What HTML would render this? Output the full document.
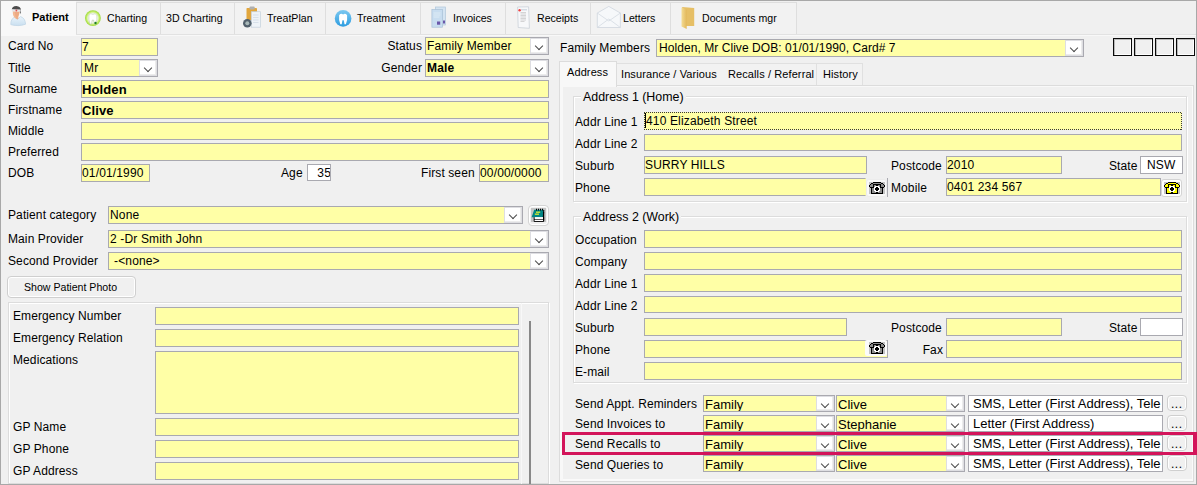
<!DOCTYPE html>
<html><head><meta charset="utf-8">
<style>
*{box-sizing:border-box;margin:0;padding:0}
html,body{width:1197px;height:485px;overflow:hidden;background:#f0f0f0;font-family:"Liberation Sans",sans-serif;font-size:12px;color:#000;position:relative}
div,span{position:absolute}
.l{white-space:nowrap;line-height:14px;font-size:12px;letter-spacing:0.1px}
.r{text-align:right}
.i{background:#ffffa6;border:1px solid #a9a9b0;overflow:hidden}
.w{background:#fff;border:1px solid #a9a9b0;overflow:hidden}
.t{white-space:nowrap;line-height:14px;left:1px;letter-spacing:0.15px}
.dd{top:0;right:0;bottom:0;width:18px;background:#fff;border:1px solid #dedee2;box-shadow:inset -1px -1px 0 #ececec}
.dd::after{content:"";position:absolute;left:5px;top:4px;width:5px;height:5px;border-right:1.2px solid #4a4a4a;border-bottom:1.2px solid #4a4a4a;transform:rotate(45deg)}
.tab{top:2px;height:33px;border-top:1px solid #dedede;border-right:1px solid #dedede;background:#f2f2f2}
.tt{white-space:nowrap;line-height:14px;font-size:10.6px;top:11px}
.gb{border:1px solid #dcdcdc;box-shadow:inset 1px 1px 0 #fff,1px 1px 0 #fff}
.gl{background:#f0f0f0;padding:0 2px;line-height:14px;white-space:nowrap;font-size:12.4px}
.ph{background:#f8f8f8;border-right:1px solid #d8d8d8}
.dots{background:#f0f0f0;border:1px solid #cfcfcf;border-radius:4px;box-shadow:inset 0 0 0 1px #fff}
</style></head><body>
<!-- outer border -->


<!-- TOP TABS -->
<div style="left:1px;top:1px;width:75px;height:35px;background:#f8f8f8"></div>
<div style="left:76px;top:2px;width:721px;height:32px;background:#f2f2f2;border-top:1px solid #dedede"></div><div style="left:76px;top:2px;width:1px;height:32px;background:#dedede"></div><div style="left:160px;top:2px;width:1px;height:32px;background:#dedede"></div><div style="left:234px;top:2px;width:1px;height:32px;background:#dedede"></div><div style="left:325px;top:2px;width:1px;height:32px;background:#dedede"></div><div style="left:420px;top:2px;width:1px;height:32px;background:#dedede"></div><div style="left:505px;top:2px;width:1px;height:32px;background:#dedede"></div><div style="left:590px;top:2px;width:1px;height:32px;background:#dedede"></div><div style="left:670px;top:2px;width:1px;height:32px;background:#dedede"></div><div style="left:796px;top:2px;width:1px;height:32px;background:#dedede"></div>
<div style="left:76px;top:34px;width:1121px;height:1px;background:#e2e2e2"></div>
<div style="left:76px;top:35px;width:1121px;height:1px;background:#f8f8f8"></div>
<svg style="position:absolute;left:0;top:0" width="800" height="36" viewBox="0 0 800 36">
<defs>
<linearGradient id="gsh" x1="0" y1="0" x2="0" y2="1"><stop offset="0" stop-color="#eaf4fb"/><stop offset="1" stop-color="#c9dff0"/></linearGradient>
<radialGradient id="ggr" cx="0.5" cy="0.5" r="0.5"><stop offset="0.6" stop-color="#f4fbe8"/><stop offset="0.78" stop-color="#c8ee70"/><stop offset="1" stop-color="#98d838"/></radialGradient>
<linearGradient id="gbl" x1="0" y1="0" x2="0" y2="1"><stop offset="0" stop-color="#7cc8f0"/><stop offset="1" stop-color="#2c9ce0"/></linearGradient>
<linearGradient id="gfo" x1="0" y1="0" x2="1" y2="0"><stop offset="0" stop-color="#f4dc94"/><stop offset="1" stop-color="#e2b85c"/></linearGradient>
</defs>
<!-- patient -->
<path d="M10.8,24.6 Q10.6,19.2 14.6,17 L17.4,19.4 L20.6,16.6 Q25.2,18.2 25.6,24.2 Q22,25.6 18,25.6 Q13.2,25.6 10.8,24.6 Z" fill="url(#gsh)" stroke="#bcd2e4" stroke-width="0.7"/>
<path d="M14.6,15.5 L18.2,15.5 L18.4,18.4 L17.2,19.6 L14.8,17.6 Z" fill="#eeae88"/>
<path d="M12.8,11 Q12.6,17 15.8,18.6 Q18.8,17.6 19.6,12.6 L19.6,10.5 Z" fill="#f3b892"/>
<path d="M14.6,11.6 Q15.2,16.5 16.4,18.2 Q18.6,17 19.4,12 Z" fill="#e8a078" opacity="0.55"/>
<path d="M11.8,9.6 Q12.2,5.8 16.4,5.9 Q20.8,6.2 21,10.2 L20.6,14.2 Q19.8,12 19.4,10.6 Z" fill="#4c4c4c"/>
<path d="M11.8,9.2 L20.8,9.6 L20.6,11.8 L12,11.6 Z" fill="#e6e8ea"/>
<circle cx="16.4" cy="10.5" r="0.9" fill="#e05050"/>
<!-- charting -->
<circle cx="92.9" cy="18.1" r="7.9" fill="url(#ggr)"/>
<path d="M88.9,15.100000000000001 Q90.7,12.600000000000001 92.9,14.3 Q95.10000000000001,12.600000000000001 96.9,15.100000000000001 Q97.5,19.6 95.7,24.1 L94.30000000000001,24.1 L93.60000000000001,20.1 L92.2,20.1 L91.5,24.1 L90.10000000000001,24.1 Q88.30000000000001,19.6 88.9,15.100000000000001 Z" fill="#ffffff" stroke="#b8c8b0" stroke-width="0.6"/>
<circle cx="95.5" cy="23" r="1.2" fill="#208020"/>
<!-- treatplan -->
<rect x="246.5" y="8" width="10.5" height="12" rx="0.8" fill="#e2a63c"/>
<rect x="249.5" y="6.4" width="5.2" height="3" rx="1" fill="#b0b0b0"/>
<rect x="251.3" y="11.7" width="9.2" height="15.5" fill="#eef3f8" stroke="#c4d0dc" stroke-width="0.7"/>
<path d="M253,15h5.5M253,17.5h5.5M253,20h5.5M253,22.5h5.5" stroke="#c8d4e0" stroke-width="0.6"/>
<circle cx="247.3" cy="23.2" r="4.3" fill="#52606c"/>
<circle cx="247.3" cy="23.2" r="2" fill="#a8b8b8"/>
<!-- treatment -->
<circle cx="343.1" cy="18.4" r="8.3" fill="url(#gbl)"/>
<path d="M339.1,15.3 Q340.90000000000003,12.8 343.1,14.5 Q345.3,12.8 347.1,15.3 Q347.70000000000005,19.8 345.90000000000003,24.3 L344.5,24.3 L343.8,20.3 L342.40000000000003,20.3 L341.70000000000005,24.3 L340.3,24.3 Q338.5,19.8 339.1,15.3 Z" fill="#ffffff"/>
<!-- invoices -->
<rect x="435.4" y="7" width="10.1" height="18" fill="#d4e4f2" stroke="#b0c6da" stroke-width="0.7"/>
<rect x="431.9" y="9.6" width="10.7" height="17.6" fill="#c8ddf0" stroke="#a8c0d6" stroke-width="0.7"/>
<path d="M433.5,13h7M433.5,15h7M433.5,17h6" stroke="#e6f0f8" stroke-width="0.7"/>
<rect x="437" y="21.5" width="3.2" height="3.2" fill="#6a58aa"/>
<rect x="443" y="20.5" width="2" height="3" fill="#6a58aa"/>
<!-- receipts -->
<path d="M517.6,7 L528.6,6.8 L529.4,28.3 L518.2,27.5 Z" fill="#f7f8fa" stroke="#c4ccd4" stroke-width="0.7"/>
<circle cx="519.6" cy="10.3" r="1.2" fill="#f04040"/>
<path d="M520.5,12.5h5.5M520.5,14h5.5M520.5,15.5h5.5M520.5,17h5.5M520.5,18.5h5.5M520.5,20h5.5M520.5,21.5h4" stroke="#a8a8a8" stroke-width="0.45"/><path d="M521,9.8h6" stroke="#b8c4d0" stroke-width="0.8"/>
<!-- letters -->
<path d="M597.3,13 L608.8,6.4 L620.4,13 L620.4,27.5 L597.3,27.5 Z" fill="#f6f8fa" stroke="#cfd6de" stroke-width="0.8"/>
<path d="M597.3,27.5 L608.8,19 L620.4,27.5 M597.3,13 L608.8,21 L620.4,13" fill="none" stroke="#d4dbe2" stroke-width="0.8"/>
<!-- folder -->
<path d="M682.2,7 L694.2,8 L694.2,26 L682.2,26 Z" fill="#e6bf66"/>
<path d="M681.5,7.5 L686.7,9.5 L686.7,29 L681.5,26.5 Z" fill="url(#gfo)"/>
</svg>
<div class="tt" style="left:32px;font-weight:bold;font-size:11px;top:10px">Patient</div>
<div class="tt" style="left:107px">Charting</div>
<div class="tt" style="left:166px">3D Charting</div>
<div class="tt" style="left:267px">TreatPlan</div>
<div class="tt" style="left:357px">Treatment</div>
<div class="tt" style="left:453px">Invoices</div>
<div class="tt" style="left:537px">Receipts</div>
<div class="tt" style="left:623px">Letters</div>
<div class="tt" style="left:702px">Documents mgr</div>

<!-- LEFT PANEL -->
<div class="l" style="left:8px;top:39px">Card No</div>
<div class="i" style="left:81px;top:38px;width:77px;height:18px"><div class="t" style="top:1px;left:0">7</div></div>
<div class="l" style="left:8px;top:61px">Title</div>
<div class="i" style="left:81px;top:59px;width:77px;height:18px"><div class="t" style="top:1px;left:2px">Mr</div><div class="dd"></div></div>
<div class="l" style="left:8px;top:82px">Surname</div>
<div class="i" style="left:81px;top:80px;width:468px;height:18px"><div class="t" style="top:2px;font-weight:bold;font-size:13px;left:0;letter-spacing:0.12px">Holden</div></div>
<div class="l" style="left:8px;top:103px">Firstname</div>
<div class="i" style="left:81px;top:101px;width:468px;height:18px"><div class="t" style="top:2px;font-weight:bold;font-size:13px;left:0;letter-spacing:0.12px">Clive</div></div>
<div class="l" style="left:8px;top:124px">Middle</div>
<div class="i" style="left:81px;top:122px;width:468px;height:18px"></div>
<div class="l" style="left:8px;top:145px">Preferred</div>
<div class="i" style="left:81px;top:143px;width:468px;height:18px"></div>
<div class="l" style="left:8px;top:166px">DOB</div>
<div class="i" style="left:81px;top:164px;width:69px;height:18px"><div class="t" style="top:1px;left:0">01/01/1990</div></div>
<div class="l" style="left:281px;top:166px">Age</div>
<div class="w" style="left:307px;top:164px;width:24px;height:17px"><div class="t" style="top:1px;left:auto;right:-1px">35</div></div>
<div class="l" style="left:421px;top:166px">First seen</div>
<div class="i" style="left:479px;top:164px;width:70px;height:18px"><div class="t" style="top:1px;left:0">00/00/0000</div></div>

<div class="l r" style="left:330px;width:92px;top:39px">Status</div>
<div class="i" style="left:425px;top:37px;width:124px;height:18px"><div class="t" style="top:1px;left:1px">Family Member</div><div class="dd"></div></div>
<div class="l r" style="left:330px;width:92px;top:61px">Gender</div>
<div class="i" style="left:425px;top:59px;width:124px;height:18px"><div class="t" style="top:1px;font-weight:bold;left:1px">Male</div><div class="dd"></div></div>

<div class="l" style="left:8px;top:208px">Patient category</div>
<div class="i" style="left:108px;top:206px;width:415px;height:18px"><div class="t" style="top:1px;left:1px">None</div><div class="dd"></div></div>
<div style="left:528px;top:205px;width:21px;height:21px;border:1px solid #d4d4d4;border-radius:4px;background:#f0f0f0;box-shadow:inset 0 0 0 1px #fff"></div><svg style="position:absolute;left:531px;top:208px" width="15" height="15" viewBox="0 0 15 15"><rect x="0" y="0" width="15" height="14" fill="#c4c4c4"/><path d="M3.2,1.8 H12.8 L12.3,9.2 H0.6 Z" fill="#008484"/><path d="M12.8,2 L12.3,9.2" stroke="#000" stroke-width="1"/><path d="M5,1.6 h1 M7,1.6 h1 M9,1.6 h1 M11,1.6 h1" stroke="#000" stroke-width="1.6"/><rect x="5" y="3.6" width="4.2" height="1.1" fill="#ffff20"/><rect x="3.8" y="5.6" width="4.2" height="1.1" fill="#ffff20"/><path d="M3.2,9.2 V13.5 H12.6 V9.2 M3.2,11.3 H12.6" fill="#fff" stroke="#000" stroke-width="1"/><rect x="3.8" y="9.6" width="8.2" height="1.3" fill="#fff"/><rect x="3.8" y="11.8" width="8.2" height="1.3" fill="#fff"/><path d="M12.6,4 V12.5" stroke="#000" stroke-width="1.2"/></svg>
<div class="l" style="left:8px;top:232px">Main Provider</div>
<div class="i" style="left:108px;top:230px;width:441px;height:18px"><div class="t" style="top:1px;left:1px">2 -Dr Smith John</div><div class="dd"></div></div>
<div class="l" style="left:8px;top:254px">Second Provider</div>
<div class="i" style="left:108px;top:252px;width:441px;height:18px"><div class="t" style="top:1px;left:5px">-&lt;none&gt;</div><div class="dd"></div></div>
<div style="left:7px;top:276px;width:129px;height:22px;border:1px solid #cfcfcf;border-radius:4px;background:#f0f0f0;box-shadow:inset 0 0 0 1px #fff"></div>
<div class="l" style="left:24px;top:280px;font-size:10.6px;letter-spacing:0">Show Patient Photo</div>

<div class="gb" style="left:8px;top:302px;width:541px;height:182px"></div>
<div class="l" style="left:13px;top:309px">Emergency Number</div>
<div class="i" style="left:155px;top:307px;width:364px;height:18px"></div>
<div class="l" style="left:13px;top:331px">Emergency Relation</div>
<div class="i" style="left:155px;top:329px;width:364px;height:18px"></div>
<div class="l" style="left:13px;top:353px">Medications</div>
<div class="i" style="left:155px;top:351px;width:364px;height:63px"></div>
<div class="l" style="left:13px;top:420px">GP Name</div>
<div class="i" style="left:155px;top:418px;width:364px;height:18px"></div>
<div class="l" style="left:13px;top:442px">GP Phone</div>
<div class="i" style="left:155px;top:440px;width:364px;height:18px"></div>
<div class="l" style="left:13px;top:464px">GP Address</div>
<div class="i" style="left:155px;top:462px;width:364px;height:18px"></div>
<div style="left:529px;top:321px;width:2px;height:164px;background:#888"></div>

<!-- separator -->
<div style="left:521px;top:303px;width:1px;height:181px;background:#f8f8f8"></div>

<!-- RIGHT PANEL -->
<div class="l" style="left:560px;top:41px">Family Members</div>
<div class="i" style="left:656px;top:39px;width:428px;height:18px"><div class="t" style="top:1px;left:2px;letter-spacing:0.06px">Holden, Mr Clive DOB: 01/01/1990, Card# 7</div><div class="dd"></div></div>
<div style="left:1113px;top:38px;width:19px;height:18px;border:1px solid #0a0a0a;box-shadow:inset 1px 1px 0 #b8b8b8,inset -1px -1px 0 #fff"></div>
<div style="left:1134px;top:38px;width:19px;height:18px;border:1px solid #0a0a0a;box-shadow:inset 1px 1px 0 #b8b8b8,inset -1px -1px 0 #fff"></div>
<div style="left:1155px;top:38px;width:19px;height:18px;border:1px solid #0a0a0a;box-shadow:inset 1px 1px 0 #b8b8b8,inset -1px -1px 0 #fff"></div>
<div style="left:1176px;top:38px;width:19px;height:18px;border:1px solid #0a0a0a;box-shadow:inset 1px 1px 0 #b8b8b8,inset -1px -1px 0 #fff"></div>

<!-- tabs -->
<div style="left:559px;top:85px;width:635px;height:397px;border:1px solid #dcdcdc;background:#f0f0f0;box-shadow:inset 3px 1px 0 #f8f8f8,inset -1px -2px 0 #fafafa"></div>
<div style="left:616px;top:63px;width:107px;height:23px;border:1px solid #e0e0e0;border-bottom:none;background:#f2f2f2"></div>
<div style="left:722px;top:63px;width:95px;height:23px;border:1px solid #e0e0e0;border-left:none;border-bottom:none;background:#f2f2f2"></div>
<div style="left:817px;top:63px;width:46px;height:23px;border:1px solid #e0e0e0;border-left:none;border-bottom:none;background:#f2f2f2"></div>
<div style="left:616px;top:85px;width:247px;height:1px;background:#dcdcdc"></div>
<div style="left:559px;top:61px;width:58px;height:26px;border:1px solid #dcdcdc;border-bottom:none;background:#f8f8f8"></div>
<div class="l" style="left:567px;top:65px;font-size:11px">Address</div>
<div class="l" style="left:621px;top:67px;font-size:11px">Insurance / Various</div>
<div class="l" style="left:728px;top:67px;font-size:11px">Recalls / Referral</div>
<div class="l" style="left:823px;top:67px;font-size:11px">History</div>
<!-- group 1 -->
<div class="gb" style="left:573px;top:96px;width:614px;height:106px"></div>
<div class="gl" style="left:581px;top:90px">Address 1 (Home)</div>
<div class="l" style="left:575px;top:115px">Addr Line 1</div>
<div style="left:644px;top:112px;width:538px;height:18px;background:repeating-linear-gradient(90deg,#3a3a3a 0 1px,transparent 1px 2px) top/100% 1px no-repeat,repeating-linear-gradient(90deg,#3a3a3a 0 1px,transparent 1px 2px) bottom/100% 1px no-repeat,repeating-linear-gradient(0deg,#3a3a3a 0 1px,transparent 1px 2px) left/1px 100% no-repeat,repeating-linear-gradient(0deg,#3a3a3a 0 1px,transparent 1px 2px) right/1px 100% no-repeat,#ffffa6"><div class="t" style="top:2px;left:2px">410 Elizabeth Street</div><div style="left:1px;top:1px;width:1px;height:15px;background:#000"></div></div>
<div class="l" style="left:575px;top:137px">Addr Line 2</div>
<div class="i" style="left:644px;top:134px;width:538px;height:17px"></div>
<div class="l" style="left:575px;top:159px">Suburb</div>
<div class="i" style="left:644px;top:156px;width:223px;height:18px"><div class="t" style="top:1px;left:0">SURRY HILLS</div></div>
<div class="l" style="left:891px;top:159px">Postcode</div>
<div class="i" style="left:946px;top:156px;width:116px;height:18px"><div class="t" style="top:1px;left:0">2010</div></div>
<div class="l" style="left:1109px;top:159px">State</div>
<div class="w" style="left:1140px;top:156px;width:43px;height:18px"><div class="t" style="top:1px;left:6px">NSW</div></div>
<div class="l" style="left:575px;top:181px">Phone</div>
<div class="i" style="left:644px;top:178px;width:222px;height:18px;border-right-color:#ffffa6"></div>
<div style="left:866px;top:179px;width:21px;height:18px;background:#f9f9f9;border:1px solid #ececec;border-radius:3px"></div><div style="left:887px;top:178px;width:1px;height:19px;background:#a9a9b0"></div><svg style="position:absolute;left:869px;top:182px" width="16" height="12" viewBox="0 0 16 12" shape-rendering="crispEdges"><rect x="0" y="0" width="4" height="1" fill="#c4c4c4"/><rect x="4" y="0" width="8" height="1" fill="#000"/><rect x="12" y="0" width="4" height="1" fill="#c4c4c4"/><rect x="0" y="1" width="2" height="1" fill="#c4c4c4"/><rect x="2" y="1" width="2" height="1" fill="#000"/><rect x="4" y="1" width="8" height="1" fill="#8c8c8c"/><rect x="12" y="1" width="2" height="1" fill="#000"/><rect x="14" y="1" width="2" height="1" fill="#c4c4c4"/><rect x="0" y="2" width="1" height="1" fill="#c4c4c4"/><rect x="1" y="2" width="1" height="1" fill="#000"/><rect x="2" y="2" width="2" height="1" fill="#8c8c8c"/><rect x="4" y="2" width="8" height="1" fill="#000"/><rect x="12" y="2" width="2" height="1" fill="#8c8c8c"/><rect x="14" y="2" width="1" height="1" fill="#000"/><rect x="15" y="2" width="1" height="1" fill="#c4c4c4"/><rect x="0" y="3" width="1" height="1" fill="#000"/><rect x="1" y="3" width="3" height="1" fill="#8c8c8c"/><rect x="4" y="3" width="1" height="1" fill="#000"/><rect x="5" y="3" width="2" height="1" fill="#8c8c8c"/><rect x="7" y="3" width="2" height="1" fill="#000"/><rect x="9" y="3" width="2" height="1" fill="#8c8c8c"/><rect x="11" y="3" width="1" height="1" fill="#000"/><rect x="12" y="3" width="3" height="1" fill="#8c8c8c"/><rect x="15" y="3" width="1" height="1" fill="#000"/><rect x="0" y="4" width="1" height="1" fill="#000"/><rect x="1" y="4" width="3" height="1" fill="#8c8c8c"/><rect x="4" y="4" width="1" height="1" fill="#000"/><rect x="5" y="4" width="1" height="1" fill="#8c8c8c"/><rect x="6" y="4" width="4" height="1" fill="#fff"/><rect x="10" y="4" width="1" height="1" fill="#8c8c8c"/><rect x="11" y="4" width="1" height="1" fill="#000"/><rect x="12" y="4" width="3" height="1" fill="#8c8c8c"/><rect x="15" y="4" width="1" height="1" fill="#000"/><rect x="0" y="5" width="1" height="1" fill="#c4c4c4"/><rect x="1" y="5" width="4" height="1" fill="#000"/><rect x="5" y="5" width="2" height="1" fill="#fff"/><rect x="7" y="5" width="2" height="1" fill="#000"/><rect x="9" y="5" width="2" height="1" fill="#fff"/><rect x="11" y="5" width="4" height="1" fill="#000"/><rect x="15" y="5" width="1" height="1" fill="#c4c4c4"/><rect x="0" y="6" width="2" height="1" fill="#c4c4c4"/><rect x="2" y="6" width="1" height="1" fill="#000"/><rect x="3" y="6" width="2" height="1" fill="#8c8c8c"/><rect x="5" y="6" width="1" height="1" fill="#fff"/><rect x="6" y="6" width="4" height="1" fill="#000"/><rect x="10" y="6" width="1" height="1" fill="#fff"/><rect x="11" y="6" width="2" height="1" fill="#8c8c8c"/><rect x="13" y="6" width="1" height="1" fill="#000"/><rect x="14" y="6" width="2" height="1" fill="#c4c4c4"/><rect x="0" y="7" width="2" height="1" fill="#c4c4c4"/><rect x="2" y="7" width="1" height="1" fill="#000"/><rect x="3" y="7" width="2" height="1" fill="#8c8c8c"/><rect x="5" y="7" width="1" height="1" fill="#fff"/><rect x="6" y="7" width="4" height="1" fill="#000"/><rect x="10" y="7" width="1" height="1" fill="#fff"/><rect x="11" y="7" width="2" height="1" fill="#8c8c8c"/><rect x="13" y="7" width="1" height="1" fill="#000"/><rect x="14" y="7" width="2" height="1" fill="#c4c4c4"/><rect x="0" y="8" width="2" height="1" fill="#c4c4c4"/><rect x="2" y="8" width="1" height="1" fill="#000"/><rect x="3" y="8" width="2" height="1" fill="#8c8c8c"/><rect x="5" y="8" width="2" height="1" fill="#fff"/><rect x="7" y="8" width="2" height="1" fill="#000"/><rect x="9" y="8" width="2" height="1" fill="#fff"/><rect x="11" y="8" width="2" height="1" fill="#8c8c8c"/><rect x="13" y="8" width="1" height="1" fill="#000"/><rect x="14" y="8" width="2" height="1" fill="#c4c4c4"/><rect x="0" y="9" width="2" height="1" fill="#c4c4c4"/><rect x="2" y="9" width="1" height="1" fill="#000"/><rect x="3" y="9" width="3" height="1" fill="#8c8c8c"/><rect x="6" y="9" width="4" height="1" fill="#fff"/><rect x="10" y="9" width="3" height="1" fill="#8c8c8c"/><rect x="13" y="9" width="1" height="1" fill="#000"/><rect x="14" y="9" width="2" height="1" fill="#c4c4c4"/><rect x="0" y="10" width="2" height="1" fill="#c4c4c4"/><rect x="2" y="10" width="1" height="1" fill="#000"/><rect x="3" y="10" width="4" height="1" fill="#8c8c8c"/><rect x="7" y="10" width="2" height="1" fill="#000"/><rect x="9" y="10" width="4" height="1" fill="#8c8c8c"/><rect x="13" y="10" width="1" height="1" fill="#000"/><rect x="14" y="10" width="2" height="1" fill="#c4c4c4"/><rect x="0" y="11" width="2" height="1" fill="#c4c4c4"/><rect x="2" y="11" width="12" height="1" fill="#000"/><rect x="14" y="11" width="2" height="1" fill="#c4c4c4"/></svg>
<div class="l" style="left:891px;top:181px">Mobile</div>
<div class="i" style="left:946px;top:178px;width:215px;height:18px"><div class="t" style="top:1px;left:0">0401 234 567</div></div>
<div style="left:1161px;top:179px;width:21px;height:18px;background:#fff;border:1px solid #d4d4d4;border-radius:3px"></div><svg style="position:absolute;left:1164px;top:182px" width="16" height="12" viewBox="0 0 16 12" shape-rendering="crispEdges"><rect x="0" y="0" width="4" height="1" fill="#c4c4c4"/><rect x="4" y="0" width="8" height="1" fill="#000"/><rect x="12" y="0" width="4" height="1" fill="#c4c4c4"/><rect x="0" y="1" width="2" height="1" fill="#c4c4c4"/><rect x="2" y="1" width="2" height="1" fill="#000"/><rect x="4" y="1" width="8" height="1" fill="#ffff00"/><rect x="12" y="1" width="2" height="1" fill="#000"/><rect x="14" y="1" width="2" height="1" fill="#c4c4c4"/><rect x="0" y="2" width="1" height="1" fill="#c4c4c4"/><rect x="1" y="2" width="1" height="1" fill="#000"/><rect x="2" y="2" width="2" height="1" fill="#ffff00"/><rect x="4" y="2" width="8" height="1" fill="#000"/><rect x="12" y="2" width="2" height="1" fill="#ffff00"/><rect x="14" y="2" width="1" height="1" fill="#000"/><rect x="15" y="2" width="1" height="1" fill="#c4c4c4"/><rect x="0" y="3" width="1" height="1" fill="#000"/><rect x="1" y="3" width="3" height="1" fill="#ffff00"/><rect x="4" y="3" width="1" height="1" fill="#000"/><rect x="5" y="3" width="2" height="1" fill="#ffff00"/><rect x="7" y="3" width="2" height="1" fill="#000"/><rect x="9" y="3" width="2" height="1" fill="#ffff00"/><rect x="11" y="3" width="1" height="1" fill="#000"/><rect x="12" y="3" width="3" height="1" fill="#ffff00"/><rect x="15" y="3" width="1" height="1" fill="#000"/><rect x="0" y="4" width="1" height="1" fill="#000"/><rect x="1" y="4" width="3" height="1" fill="#ffff00"/><rect x="4" y="4" width="1" height="1" fill="#000"/><rect x="5" y="4" width="1" height="1" fill="#ffff00"/><rect x="6" y="4" width="4" height="1" fill="#fff"/><rect x="10" y="4" width="1" height="1" fill="#ffff00"/><rect x="11" y="4" width="1" height="1" fill="#000"/><rect x="12" y="4" width="3" height="1" fill="#ffff00"/><rect x="15" y="4" width="1" height="1" fill="#000"/><rect x="0" y="5" width="1" height="1" fill="#c4c4c4"/><rect x="1" y="5" width="4" height="1" fill="#000"/><rect x="5" y="5" width="2" height="1" fill="#fff"/><rect x="7" y="5" width="2" height="1" fill="#000"/><rect x="9" y="5" width="2" height="1" fill="#fff"/><rect x="11" y="5" width="4" height="1" fill="#000"/><rect x="15" y="5" width="1" height="1" fill="#c4c4c4"/><rect x="0" y="6" width="2" height="1" fill="#c4c4c4"/><rect x="2" y="6" width="1" height="1" fill="#000"/><rect x="3" y="6" width="2" height="1" fill="#ffff00"/><rect x="5" y="6" width="1" height="1" fill="#fff"/><rect x="6" y="6" width="4" height="1" fill="#000"/><rect x="10" y="6" width="1" height="1" fill="#fff"/><rect x="11" y="6" width="2" height="1" fill="#ffff00"/><rect x="13" y="6" width="1" height="1" fill="#000"/><rect x="14" y="6" width="2" height="1" fill="#c4c4c4"/><rect x="0" y="7" width="2" height="1" fill="#c4c4c4"/><rect x="2" y="7" width="1" height="1" fill="#000"/><rect x="3" y="7" width="2" height="1" fill="#ffff00"/><rect x="5" y="7" width="1" height="1" fill="#fff"/><rect x="6" y="7" width="4" height="1" fill="#000"/><rect x="10" y="7" width="1" height="1" fill="#fff"/><rect x="11" y="7" width="2" height="1" fill="#ffff00"/><rect x="13" y="7" width="1" height="1" fill="#000"/><rect x="14" y="7" width="2" height="1" fill="#c4c4c4"/><rect x="0" y="8" width="2" height="1" fill="#c4c4c4"/><rect x="2" y="8" width="1" height="1" fill="#000"/><rect x="3" y="8" width="2" height="1" fill="#ffff00"/><rect x="5" y="8" width="2" height="1" fill="#fff"/><rect x="7" y="8" width="2" height="1" fill="#000"/><rect x="9" y="8" width="2" height="1" fill="#fff"/><rect x="11" y="8" width="2" height="1" fill="#ffff00"/><rect x="13" y="8" width="1" height="1" fill="#000"/><rect x="14" y="8" width="2" height="1" fill="#c4c4c4"/><rect x="0" y="9" width="2" height="1" fill="#c4c4c4"/><rect x="2" y="9" width="1" height="1" fill="#000"/><rect x="3" y="9" width="3" height="1" fill="#ffff00"/><rect x="6" y="9" width="4" height="1" fill="#fff"/><rect x="10" y="9" width="3" height="1" fill="#ffff00"/><rect x="13" y="9" width="1" height="1" fill="#000"/><rect x="14" y="9" width="2" height="1" fill="#c4c4c4"/><rect x="0" y="10" width="2" height="1" fill="#c4c4c4"/><rect x="2" y="10" width="1" height="1" fill="#000"/><rect x="3" y="10" width="4" height="1" fill="#ffff00"/><rect x="7" y="10" width="2" height="1" fill="#000"/><rect x="9" y="10" width="4" height="1" fill="#ffff00"/><rect x="13" y="10" width="1" height="1" fill="#000"/><rect x="14" y="10" width="2" height="1" fill="#c4c4c4"/><rect x="0" y="11" width="2" height="1" fill="#c4c4c4"/><rect x="2" y="11" width="12" height="1" fill="#000"/><rect x="14" y="11" width="2" height="1" fill="#c4c4c4"/></svg>

<!-- group 2 -->
<div class="gb" style="left:573px;top:216px;width:614px;height:167px"></div>
<div class="gl" style="left:581px;top:210px">Address 2 (Work)</div>
<div class="l" style="left:575px;top:233px">Occupation</div>
<div class="i" style="left:644px;top:230px;width:538px;height:18px"></div>
<div class="l" style="left:575px;top:255px">Company</div>
<div class="i" style="left:644px;top:252px;width:538px;height:18px"></div>
<div class="l" style="left:575px;top:277px">Addr Line 1</div>
<div class="i" style="left:644px;top:274px;width:538px;height:18px"></div>
<div class="l" style="left:575px;top:299px">Addr Line 2</div>
<div class="i" style="left:644px;top:296px;width:538px;height:17px"></div>
<div class="l" style="left:575px;top:321px">Suburb</div>
<div class="i" style="left:644px;top:318px;width:203px;height:18px"></div>
<div class="l" style="left:891px;top:321px">Postcode</div>
<div class="i" style="left:946px;top:318px;width:116px;height:18px"></div>
<div class="l" style="left:1109px;top:321px">State</div>
<div class="w" style="left:1140px;top:318px;width:43px;height:18px"></div>
<div class="l" style="left:575px;top:343px">Phone</div>
<div class="i" style="left:644px;top:340px;width:244px;height:18px"></div>
<div style="left:865px;top:340px;width:22px;height:16px;background:#fbfbfb;border-radius:2px"></div><svg style="position:absolute;left:869px;top:342px" width="16" height="12" viewBox="0 0 16 12" shape-rendering="crispEdges"><rect x="0" y="0" width="4" height="1" fill="#c4c4c4"/><rect x="4" y="0" width="8" height="1" fill="#000"/><rect x="12" y="0" width="4" height="1" fill="#c4c4c4"/><rect x="0" y="1" width="2" height="1" fill="#c4c4c4"/><rect x="2" y="1" width="2" height="1" fill="#000"/><rect x="4" y="1" width="8" height="1" fill="#8c8c8c"/><rect x="12" y="1" width="2" height="1" fill="#000"/><rect x="14" y="1" width="2" height="1" fill="#c4c4c4"/><rect x="0" y="2" width="1" height="1" fill="#c4c4c4"/><rect x="1" y="2" width="1" height="1" fill="#000"/><rect x="2" y="2" width="2" height="1" fill="#8c8c8c"/><rect x="4" y="2" width="8" height="1" fill="#000"/><rect x="12" y="2" width="2" height="1" fill="#8c8c8c"/><rect x="14" y="2" width="1" height="1" fill="#000"/><rect x="15" y="2" width="1" height="1" fill="#c4c4c4"/><rect x="0" y="3" width="1" height="1" fill="#000"/><rect x="1" y="3" width="3" height="1" fill="#8c8c8c"/><rect x="4" y="3" width="1" height="1" fill="#000"/><rect x="5" y="3" width="2" height="1" fill="#8c8c8c"/><rect x="7" y="3" width="2" height="1" fill="#000"/><rect x="9" y="3" width="2" height="1" fill="#8c8c8c"/><rect x="11" y="3" width="1" height="1" fill="#000"/><rect x="12" y="3" width="3" height="1" fill="#8c8c8c"/><rect x="15" y="3" width="1" height="1" fill="#000"/><rect x="0" y="4" width="1" height="1" fill="#000"/><rect x="1" y="4" width="3" height="1" fill="#8c8c8c"/><rect x="4" y="4" width="1" height="1" fill="#000"/><rect x="5" y="4" width="1" height="1" fill="#8c8c8c"/><rect x="6" y="4" width="4" height="1" fill="#fff"/><rect x="10" y="4" width="1" height="1" fill="#8c8c8c"/><rect x="11" y="4" width="1" height="1" fill="#000"/><rect x="12" y="4" width="3" height="1" fill="#8c8c8c"/><rect x="15" y="4" width="1" height="1" fill="#000"/><rect x="0" y="5" width="1" height="1" fill="#c4c4c4"/><rect x="1" y="5" width="4" height="1" fill="#000"/><rect x="5" y="5" width="2" height="1" fill="#fff"/><rect x="7" y="5" width="2" height="1" fill="#000"/><rect x="9" y="5" width="2" height="1" fill="#fff"/><rect x="11" y="5" width="4" height="1" fill="#000"/><rect x="15" y="5" width="1" height="1" fill="#c4c4c4"/><rect x="0" y="6" width="2" height="1" fill="#c4c4c4"/><rect x="2" y="6" width="1" height="1" fill="#000"/><rect x="3" y="6" width="2" height="1" fill="#8c8c8c"/><rect x="5" y="6" width="1" height="1" fill="#fff"/><rect x="6" y="6" width="4" height="1" fill="#000"/><rect x="10" y="6" width="1" height="1" fill="#fff"/><rect x="11" y="6" width="2" height="1" fill="#8c8c8c"/><rect x="13" y="6" width="1" height="1" fill="#000"/><rect x="14" y="6" width="2" height="1" fill="#c4c4c4"/><rect x="0" y="7" width="2" height="1" fill="#c4c4c4"/><rect x="2" y="7" width="1" height="1" fill="#000"/><rect x="3" y="7" width="2" height="1" fill="#8c8c8c"/><rect x="5" y="7" width="1" height="1" fill="#fff"/><rect x="6" y="7" width="4" height="1" fill="#000"/><rect x="10" y="7" width="1" height="1" fill="#fff"/><rect x="11" y="7" width="2" height="1" fill="#8c8c8c"/><rect x="13" y="7" width="1" height="1" fill="#000"/><rect x="14" y="7" width="2" height="1" fill="#c4c4c4"/><rect x="0" y="8" width="2" height="1" fill="#c4c4c4"/><rect x="2" y="8" width="1" height="1" fill="#000"/><rect x="3" y="8" width="2" height="1" fill="#8c8c8c"/><rect x="5" y="8" width="2" height="1" fill="#fff"/><rect x="7" y="8" width="2" height="1" fill="#000"/><rect x="9" y="8" width="2" height="1" fill="#fff"/><rect x="11" y="8" width="2" height="1" fill="#8c8c8c"/><rect x="13" y="8" width="1" height="1" fill="#000"/><rect x="14" y="8" width="2" height="1" fill="#c4c4c4"/><rect x="0" y="9" width="2" height="1" fill="#c4c4c4"/><rect x="2" y="9" width="1" height="1" fill="#000"/><rect x="3" y="9" width="3" height="1" fill="#8c8c8c"/><rect x="6" y="9" width="4" height="1" fill="#fff"/><rect x="10" y="9" width="3" height="1" fill="#8c8c8c"/><rect x="13" y="9" width="1" height="1" fill="#000"/><rect x="14" y="9" width="2" height="1" fill="#c4c4c4"/><rect x="0" y="10" width="2" height="1" fill="#c4c4c4"/><rect x="2" y="10" width="1" height="1" fill="#000"/><rect x="3" y="10" width="4" height="1" fill="#8c8c8c"/><rect x="7" y="10" width="2" height="1" fill="#000"/><rect x="9" y="10" width="4" height="1" fill="#8c8c8c"/><rect x="13" y="10" width="1" height="1" fill="#000"/><rect x="14" y="10" width="2" height="1" fill="#c4c4c4"/><rect x="0" y="11" width="2" height="1" fill="#c4c4c4"/><rect x="2" y="11" width="12" height="1" fill="#000"/><rect x="14" y="11" width="2" height="1" fill="#c4c4c4"/></svg>
<div class="l r" style="left:900px;width:43px;top:343px">Fax</div>
<div class="i" style="left:946px;top:340px;width:236px;height:18px"></div>
<div class="l" style="left:575px;top:365px">E-mail</div>
<div class="i" style="left:644px;top:362px;width:538px;height:18px"></div>

<!-- send rows -->
<div class="l" style="left:575px;top:397px">Send Appt. Reminders</div>
<div class="i" style="left:703px;top:395px;width:132px;height:17px"><div class="t" style="top:2px;font-size:13px;left:1px;letter-spacing:0">Family</div><div class="dd"></div></div>
<div class="i" style="left:836px;top:395px;width:129px;height:17px"><div class="t" style="top:2px;font-size:13px;left:1px;letter-spacing:0">Clive</div><div class="dd"></div></div>
<div class="w" style="left:968px;top:395px;width:195px;height:17px"><div class="t" style="top:1px;left:4px;font-size:13px;letter-spacing:0">SMS, Letter (First Address), Tele</div></div>
<div class="dots" style="left:1167px;top:395px;width:20px;height:16px"><div style="left:3px;top:1px;font-size:12px;line-height:14px;letter-spacing:0.5px">...</div></div>

<div class="l" style="left:575px;top:417px">Send Invoices to</div>
<div class="i" style="left:703px;top:415px;width:132px;height:17px"><div class="t" style="top:2px;font-size:13px;left:1px;letter-spacing:0">Family</div><div class="dd"></div></div>
<div class="i" style="left:836px;top:415px;width:129px;height:17px"><div class="t" style="top:2px;font-size:13px;left:1px;letter-spacing:0">Stephanie</div><div class="dd"></div></div>
<div class="w" style="left:968px;top:415px;width:195px;height:17px"><div class="t" style="top:1px;left:4px;font-size:13px;letter-spacing:0">Letter (First Address)</div></div>
<div class="dots" style="left:1167px;top:415px;width:20px;height:16px"><div style="left:3px;top:1px;font-size:12px;line-height:14px;letter-spacing:0.5px">...</div></div>

<div class="l" style="left:575px;top:437px">Send Recalls to</div>
<div class="i" style="left:703px;top:435px;width:132px;height:17px"><div class="t" style="top:2px;font-size:13px;left:1px;letter-spacing:0">Family</div><div class="dd"></div></div>
<div class="i" style="left:836px;top:435px;width:129px;height:17px"><div class="t" style="top:2px;font-size:13px;left:1px;letter-spacing:0">Clive</div><div class="dd"></div></div>
<div class="w" style="left:968px;top:435px;width:195px;height:17px"><div class="t" style="top:1px;left:4px;font-size:13px;letter-spacing:0">SMS, Letter (First Address), Tele</div></div>
<div class="dots" style="left:1167px;top:435px;width:20px;height:16px"><div style="left:3px;top:1px;font-size:12px;line-height:14px;letter-spacing:0.5px">...</div></div>

<div class="l" style="left:575px;top:458px">Send Queries to</div>
<div class="i" style="left:703px;top:455px;width:132px;height:17px"><div class="t" style="top:2px;font-size:13px;left:1px;letter-spacing:0">Family</div><div class="dd"></div></div>
<div class="i" style="left:836px;top:455px;width:129px;height:17px"><div class="t" style="top:2px;font-size:13px;left:1px;letter-spacing:0">Clive</div><div class="dd"></div></div>
<div class="w" style="left:968px;top:455px;width:195px;height:17px"><div class="t" style="top:1px;left:4px;font-size:13px;letter-spacing:0">SMS, Letter (First Address), Tele</div></div>
<div class="dots" style="left:1167px;top:455px;width:20px;height:16px"><div style="left:3px;top:1px;font-size:12px;line-height:14px;letter-spacing:0.5px">...</div></div>


<div style="left:0;top:0;width:1197px;height:1px;background:#a8a8a8"></div>
<div style="left:0;top:0;width:1px;height:485px;background:#a8a8a8"></div>
<div style="left:1196px;top:0;width:1px;height:485px;background:#a8a8a8"></div>
<div style="left:0;top:484px;width:1197px;height:1px;background:#a8a8a8"></div>
<!-- red highlight -->
<div style="left:562px;top:432px;width:635px;height:23px;border:3px solid #d3145a;border-right-width:4px"></div>
</body></html>
